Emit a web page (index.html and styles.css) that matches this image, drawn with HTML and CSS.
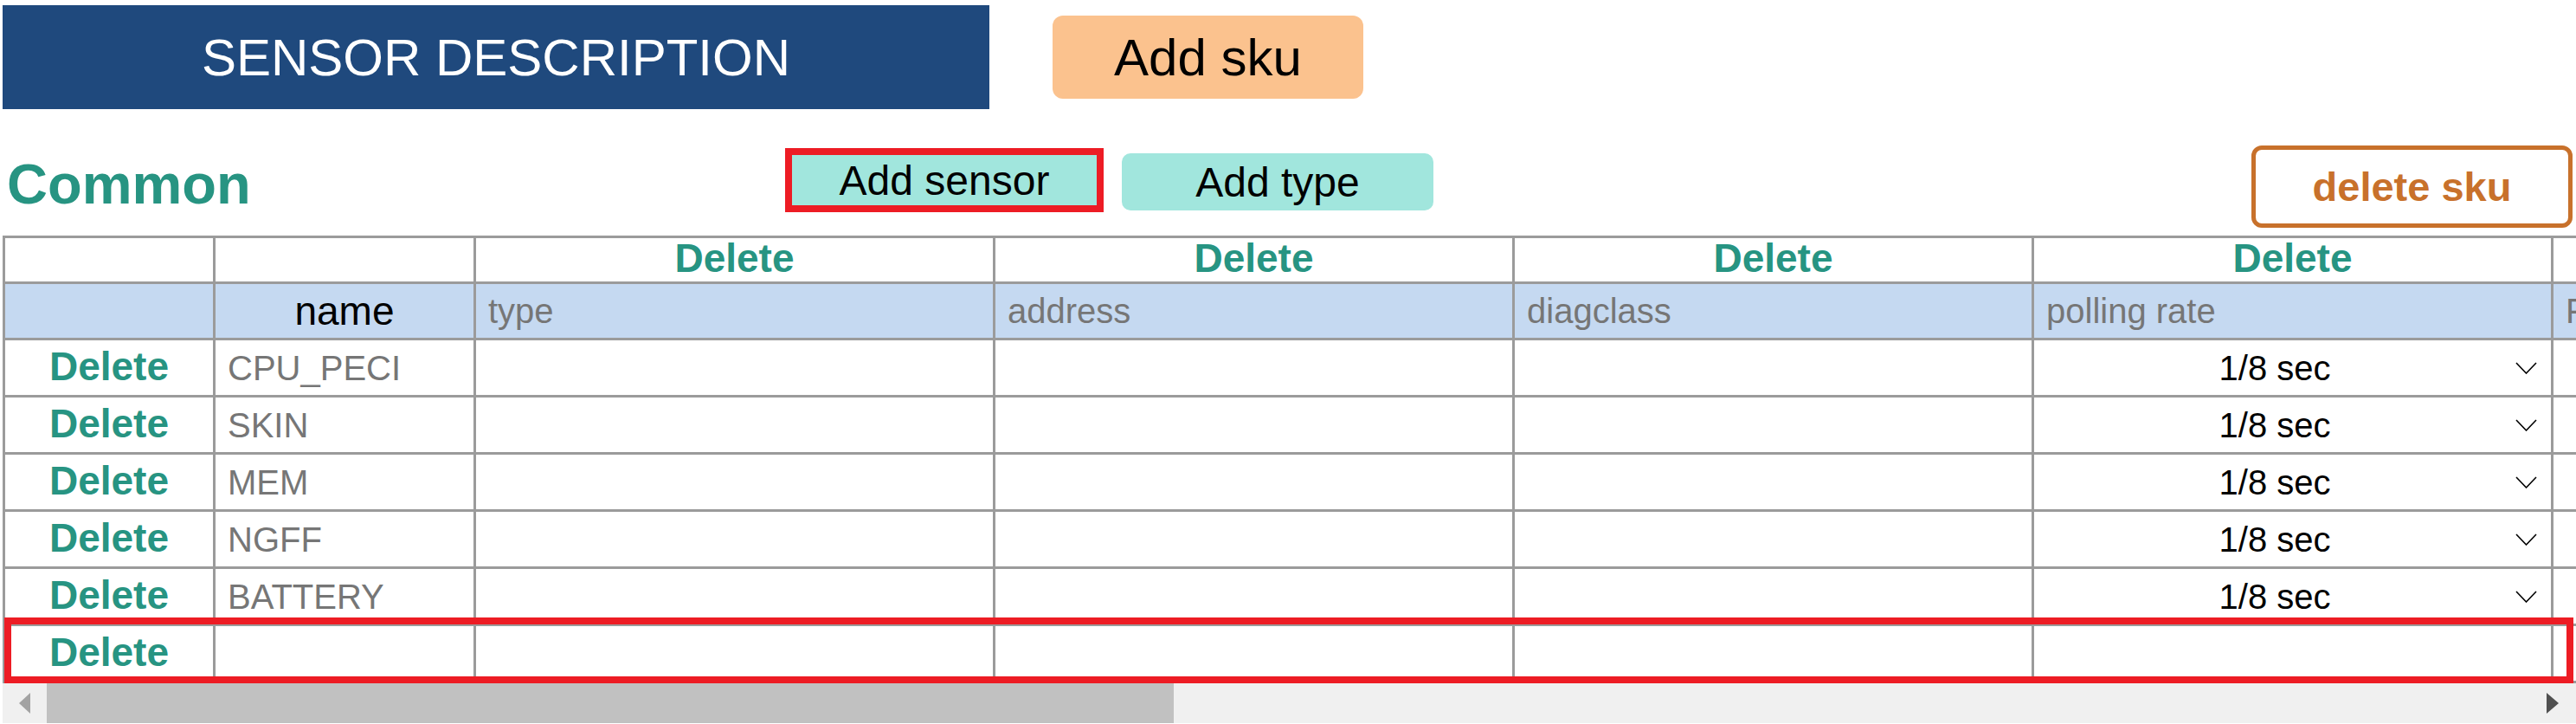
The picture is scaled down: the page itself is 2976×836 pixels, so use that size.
FILE: index.html
```html
<!DOCTYPE html>
<html lang="en">
<head>
<meta charset="utf-8">
<title>Sensor description</title>
<link rel="stylesheet" href="styles.css">
</head>
<body>
<div class="page">
  <header class="topbar">
    <div class="title">SENSOR DESCRIPTION</div>
    <button class="btn btn-sku">Add sku</button>
  </header>

  <div class="toolbar">
    <h2 class="section-title">Common</h2>
    <button class="btn btn-add-sensor">Add sensor</button>
    <button class="btn btn-add-type">Add type</button>
    <button class="btn btn-delete-sku">delete sku</button>
  </div>

  <div class="sheet">
    <div class="sheet-scroll">
      <table class="grid">
        <colgroup>
          <col class="c-del"><col class="c-name"><col class="c-wide"><col class="c-wide"><col class="c-wide"><col class="c-wide"><col class="c-wide">
        </colgroup>
        <tr class="row-del">
          <td></td><td></td>
          <td class="del">Delete</td><td class="del">Delete</td><td class="del">Delete</td><td class="del">Delete</td><td class="del">Delete</td>
        </tr>
        <tr class="row-head">
          <td></td><td class="head-name">name</td>
          <td class="head">type</td><td class="head">address</td><td class="head">diagclass</td><td class="head">polling rate</td><td class="head">Fan</td>
        </tr>
        <tr class="row-data">
          <td class="del">Delete</td><td class="val">CPU_PECI</td><td></td><td></td><td></td>
          <td class="sel-cell"><div class="select"><span class="select-value">1/8 sec</span><svg class="chev" viewBox="0 0 25 14" width="25" height="14"><polyline points="1,1 12.5,13 24,1" fill="none" stroke="#000" stroke-width="1.6"/></svg></div></td><td></td>
        </tr>
        <tr class="row-data">
          <td class="del">Delete</td><td class="val">SKIN</td><td></td><td></td><td></td>
          <td class="sel-cell"><div class="select"><span class="select-value">1/8 sec</span><svg class="chev" viewBox="0 0 25 14" width="25" height="14"><polyline points="1,1 12.5,13 24,1" fill="none" stroke="#000" stroke-width="1.6"/></svg></div></td><td></td>
        </tr>
        <tr class="row-data">
          <td class="del">Delete</td><td class="val">MEM</td><td></td><td></td><td></td>
          <td class="sel-cell"><div class="select"><span class="select-value">1/8 sec</span><svg class="chev" viewBox="0 0 25 14" width="25" height="14"><polyline points="1,1 12.5,13 24,1" fill="none" stroke="#000" stroke-width="1.6"/></svg></div></td><td></td>
        </tr>
        <tr class="row-data">
          <td class="del">Delete</td><td class="val">NGFF</td><td></td><td></td><td></td>
          <td class="sel-cell"><div class="select"><span class="select-value">1/8 sec</span><svg class="chev" viewBox="0 0 25 14" width="25" height="14"><polyline points="1,1 12.5,13 24,1" fill="none" stroke="#000" stroke-width="1.6"/></svg></div></td><td></td>
        </tr>
        <tr class="row-data">
          <td class="del">Delete</td><td class="val">BATTERY</td><td></td><td></td><td></td>
          <td class="sel-cell"><div class="select"><span class="select-value">1/8 sec</span><svg class="chev" viewBox="0 0 25 14" width="25" height="14"><polyline points="1,1 12.5,13 24,1" fill="none" stroke="#000" stroke-width="1.6"/></svg></div></td><td></td>
        </tr>
        <tr class="row-data">
          <td class="del">Delete</td><td class="val"></td><td></td><td></td><td></td><td></td><td></td>
        </tr>
      </table>
      <div class="row-highlight"></div>
    </div>
    <div class="hscroll">
      <div class="hscroll-btn"><span class="arrow-left"></span></div>
      <div class="hscroll-track"><div class="hscroll-thumb"></div></div>
      <div class="hscroll-btn"><span class="arrow-right"></span></div>
    </div>
  </div>
</div>
</body>
</html>
```

FILE: styles.css
```css
html, body {
  margin: 0;
  padding: 0;
  background: #ffffff;
  overflow: hidden;
}

body {
  font-family: "Liberation Sans", Arial, sans-serif;
  color: #000;
}

.page {
  width: 2976px;
  height: 836px;
  display: flex;
  flex-direction: column;
}

/* ---------- top bar ---------- */
.topbar {
  display: flex;
  align-items: center;
  padding: 6px 0 0 3px;
  height: 120px;
}

.title {
  width: 1140px;
  height: 120px;
  background: #1f497d;
  color: #ffffff;
  font-size: 60px;
  display: flex;
  align-items: center;
  justify-content: center;
}

.btn {
  font-family: "Liberation Sans", Arial, sans-serif;
  border: none;
  padding: 0;
  margin: 0;
  cursor: pointer;
  display: flex;
  align-items: center;
  justify-content: center;
  box-sizing: border-box;
  color: #000;
}

.btn-sku {
  margin-left: 73px;
  width: 359px;
  height: 96px;
  border-radius: 12px;
  background: #fbc28e;
  font-size: 60px;
}

/* ---------- toolbar ---------- */
.toolbar {
  display: flex;
  align-items: flex-start;
  height: 145px;
  padding: 0 4px 0 8px;
}

.section-title {
  flex: 0 0 899px;
  margin: 54px 0 0 0;
  font-size: 65px;
  line-height: 1;
  font-weight: 700;
  color: #279482;
}

.btn-add-sensor {
  margin-top: 45px;
  width: 368px;
  height: 74px;
  border: 8px solid #ed1c24;
  background: #a1e6dd;
  font-size: 48px;
}

.btn-add-type {
  margin: 51px 0 0 21px;
  width: 360px;
  height: 66px;
  border-radius: 10px;
  background: #a1e6dd;
  font-size: 48px;
}

.btn-delete-sku {
  margin: 42px 0 0 auto;
  width: 371px;
  height: 95px;
  border: 5px solid #c8712b;
  border-radius: 12px;
  background: #ffffff;
  color: #c8712b;
  font-size: 47px;
  font-weight: 700;
}

/* ---------- sheet ---------- */
.sheet {
  display: flex;
  flex-direction: column;
}

.sheet-scroll {
  position: relative;
  height: 518px;
  margin-left: 3px;
  overflow: hidden;
}

.grid {
  border-collapse: collapse;
  table-layout: fixed;
  width: 3544px;
  margin-top: 1px;
}

.c-del { width: 243px; }
.c-name { width: 301px; }
.c-wide { width: 600px; }

.grid td {
  border: 3px solid #9b9b9b;
  padding: 0;
  line-height: 1;
  vertical-align: middle;
  white-space: nowrap;
  overflow: hidden;
}

.row-del { height: 51px; }
.row-head { height: 65px; }
.row-data { height: 66px; }

.row-head td {
  background: #c5d9f1;
}

.grid td.del {
  text-align: center;
  color: #279482;
  font-weight: 700;
  font-size: 46px;
  padding-bottom: 4px;
}

.head-name {
  text-align: center;
  font-size: 46px;
  color: #000;
}

.grid td.head,
.grid td.val {
  font-size: 40px;
  color: #767676;
  padding-left: 14px;
}

.select {
  display: flex;
  align-items: center;
  padding-right: 16px;
}

.select-value {
  flex: 1;
  text-align: center;
  font-size: 40px;
  color: #000;
}

.chev {
  display: block;
}

.row-highlight {
  position: absolute;
  left: 2px;
  right: 3px;
  bottom: 0;
  height: 76px;
  border: 8px solid #ed1c24;
  box-sizing: border-box;
  pointer-events: none;
}

/* ---------- fake horizontal scrollbar ---------- */
.hscroll {
  display: flex;
  height: 46px;
  margin-left: 3px;
  background: #f0f0f0;
}

.hscroll-btn {
  width: 51px;
  display: flex;
  align-items: center;
  justify-content: center;
}

.hscroll-track {
  flex: 1;
  display: flex;
}

.hscroll-thumb {
  width: 1302px;
  background: #c1c1c1;
}

.arrow-left {
  width: 0;
  height: 0;
  border-top: 12.5px solid transparent;
  border-bottom: 12.5px solid transparent;
  border-right: 13px solid #a3a3a3;
}

.arrow-right {
  width: 0;
  height: 0;
  margin-right: 4px;
  border-top: 12.5px solid transparent;
  border-bottom: 12.5px solid transparent;
  border-left: 14px solid #505050;
}
```
